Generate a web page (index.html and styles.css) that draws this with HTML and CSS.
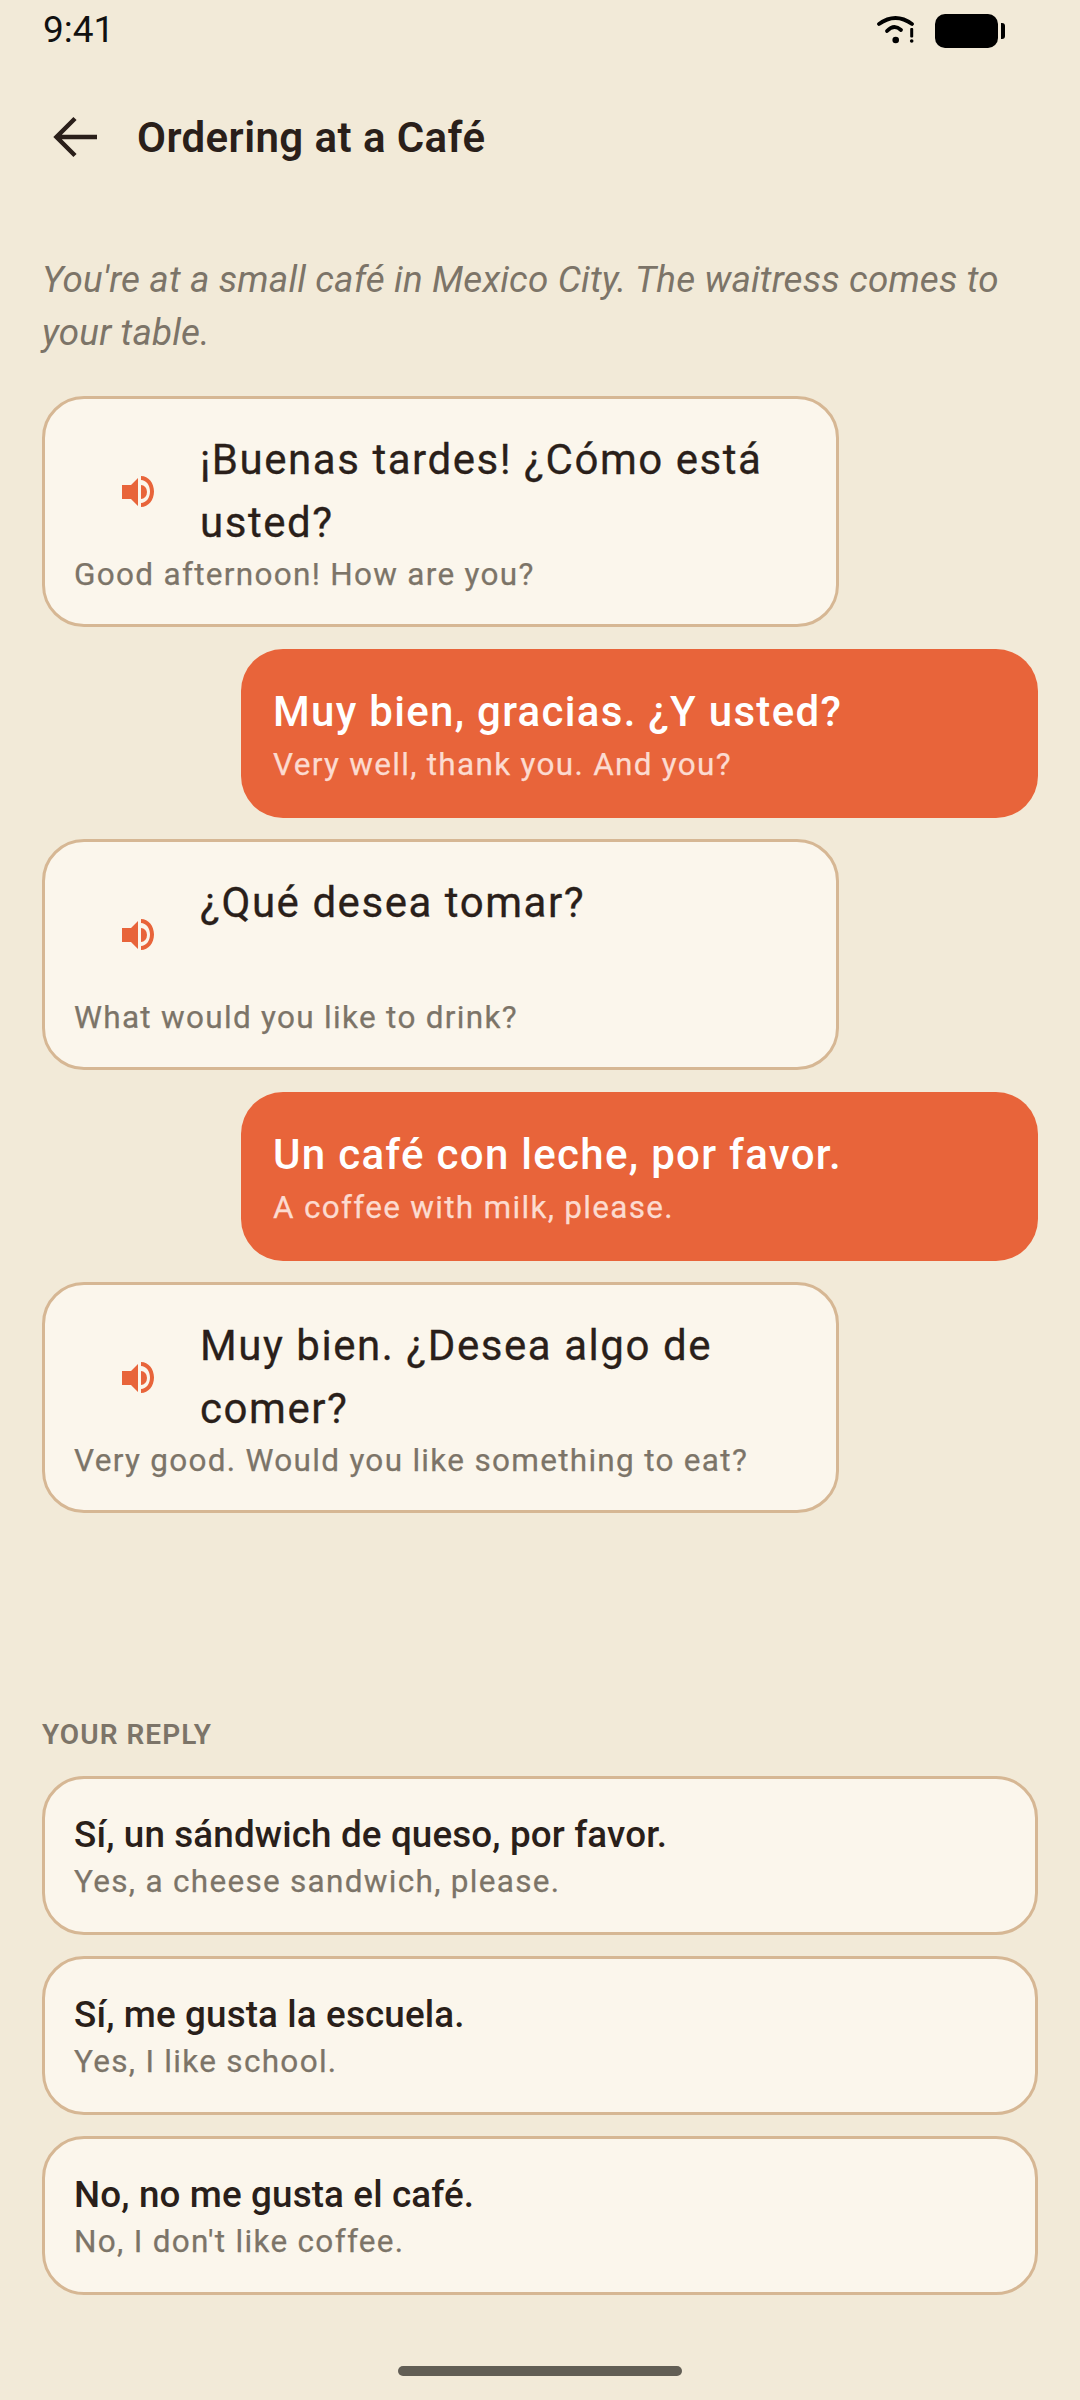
FILE: index.html
```html
<!DOCTYPE html>
<html lang="es">
<head>
<meta charset="utf-8">
<title>Ordering at a Café</title>
<link rel="stylesheet" href="styles.css">
</head>
<body>
<div class="screen">
  <div class="status">
    <span class="time">9:41</span>
    <div class="status-icons">
      <svg class="wifi" width="40" height="34" viewBox="0 0 40 34"><path d="M4 12Q20.500 0 37 12" fill="none" stroke="#000" stroke-width="3.800" stroke-linecap="round"/><path d="M12 19Q19 11.500 26 18" fill="none" stroke="#000" stroke-width="3.800" stroke-linecap="round"/><circle cx="20.700" cy="28" r="3.300" fill="#000"/><rect x="35.200" y="16" width="3" height="9.500" rx="1" fill="#000"/><circle cx="36.700" cy="29" r="1.800" fill="#000"/></svg>
      <svg class="battery" width="70" height="34" viewBox="0 0 70 34"><rect x="0" y="0" width="63" height="34" rx="10" fill="#000"/><path d="M66 9h1a3 3 0 0 1 3 3v10a3 3 0 0 1-3 3h-1z" fill="#000"/></svg>
    </div>
  </div>
  <header class="topbar">
    <svg class="back" width="46" height="46" viewBox="0 0 46 46"><path d="M46 23H8M24 4.500 5.500 23 24 41.500" fill="none" stroke="#2a1f1a" stroke-width="4.500"/></svg>
    <h1 class="title">Ordering at a Café</h1>
  </header>
  <p class="scene">You're at a small café in Mexico City. The waitress comes to your table.</p>
  <div class="chat">
    <div class="bubble them">
      <div class="row">
        <span class="speak"><svg width="32" height="32" viewBox="0 0 32 32"><path d="M0 9h9l7-7v28l-7-7H0z" fill="#e8643a"/><path d="M19 9a6 7 0 0 1 0 14z" fill="#e8643a"/><path d="M19 0c7.500 0 13 7 13 15.500S26.500 31 19 31v-4c5 0 9-5 9-11.500S24 4 19 4z" fill="#e8643a"/></svg></span>
        <span class="es">¡Buenas tardes! ¿Cómo está usted?</span>
      </div>
      <div class="en">Good afternoon! How are you?</div>
    </div>
    <div class="bubble me">
      <div class="es">Muy bien, gracias. ¿Y usted?</div>
      <div class="en">Very well, thank you. And you?</div>
    </div>
    <div class="bubble them">
      <div class="row">
        <span class="speak"><svg width="32" height="32" viewBox="0 0 32 32"><path d="M0 9h9l7-7v28l-7-7H0z" fill="#e8643a"/><path d="M19 9a6 7 0 0 1 0 14z" fill="#e8643a"/><path d="M19 0c7.500 0 13 7 13 15.500S26.500 31 19 31v-4c5 0 9-5 9-11.500S24 4 19 4z" fill="#e8643a"/></svg></span>
        <span class="es">¿Qué desea tomar?</span>
      </div>
      <div class="en">What would you like to drink?</div>
    </div>
    <div class="bubble me">
      <div class="es">Un café con leche, por favor.</div>
      <div class="en">A coffee with milk, please.</div>
    </div>
    <div class="bubble them">
      <div class="row">
        <span class="speak"><svg width="32" height="32" viewBox="0 0 32 32"><path d="M0 9h9l7-7v28l-7-7H0z" fill="#e8643a"/><path d="M19 9a6 7 0 0 1 0 14z" fill="#e8643a"/><path d="M19 0c7.500 0 13 7 13 15.500S26.500 31 19 31v-4c5 0 9-5 9-11.500S24 4 19 4z" fill="#e8643a"/></svg></span>
        <span class="es">Muy bien. ¿Desea algo de comer?</span>
      </div>
      <div class="en">Very good. Would you like something to eat?</div>
    </div>
  </div>
  <section class="replies">
    <div class="label">YOUR REPLY</div>
    <div class="option"><div class="opt-es">Sí, un sándwich de queso, por favor.</div><div class="opt-en">Yes, a cheese sandwich, please.</div></div>
    <div class="option"><div class="opt-es">Sí, me gusta la escuela.</div><div class="opt-en">Yes, I like school.</div></div>
    <div class="option"><div class="opt-es">No, no me gusta el café.</div><div class="opt-en">No, I don't like coffee.</div></div>
  </section>
  <div class="home"></div>
</div>
</body>
</html>
```
FILE: styles.css
```css
* { box-sizing: border-box; }
html, body { margin: 0; padding: 0; }
body { background: #f2ead8; font-family: Roboto, sans-serif; color: #2a1f1a; }
.screen { width: 1080px; height: 2400px; display: flex; flex-direction: column; overflow: hidden; }
.status { height: 60px; padding: 8px 75px 0 43px; display: flex; justify-content: space-between; align-items: flex-start; }
.time { font-size: 37px; line-height: 44px; color: #111; }
.status-icons { display: flex; align-items: flex-start; gap: 20px; padding-top: 4px; }
.wifi { display: block; }
.battery { display: block; margin-top: 2px; }
.topbar { height: 96px; margin-top: 29px; padding-left: 51px; display: flex; align-items: center; gap: 40px; }
.back { display: block; flex: none; }
.title { margin: 2px 0 0; font-size: 42px; font-weight: 600; line-height: 48px; letter-spacing: 0.420px; }
.scene { margin: 68px 42px 0; font-size: 36.800px; line-height: 53px; letter-spacing: 0.160px; font-style: italic; color: #7c7468; }
.chat { margin-top: 37px; padding: 0 42px; display: flex; flex-direction: column; gap: 21px; }
.bubble { width: 797px; border-radius: 42px; }
.them { background: #fbf6ec; border: 3px solid #d6b794; padding: 29px 29px 27px; }
.me { background: #e8643a; color: #fff; align-self: flex-end; margin-top: 1px; padding: 35px 32px 0; height: 169px; }
.row { display: flex; align-items: flex-start; min-height: 126px; }
.speak { flex: none; width: 126px; height: 126px; padding: 2px 0 0 2px; display: flex; align-items: center; justify-content: center; }
.speak svg { display: block; }
.es { font-size: 42px; line-height: 63px; letter-spacing: 1.550px; font-weight: 400; -webkit-text-stroke: 0.300px currentColor; }
.me .es { line-height: 56px; letter-spacing: 1.300px; font-weight: 500; -webkit-text-stroke: 0; }
.en { font-size: 31.500px; line-height: 44px; letter-spacing: 1.300px; font-weight: 400; color: #7c7468; margin-top: -1px; -webkit-text-stroke: 0.250px currentColor; }
.me .en { color: #fcdbd0; margin-top: 3px; }
.replies { margin-top: auto; padding: 0 42px; display: flex; flex-direction: column; gap: 21px; }
.label { font-size: 28px; line-height: 34px; font-weight: 600; letter-spacing: 1.050px; color: #7c7468; margin-bottom: 3px; }
.option { height: 159px; background: #fbf6ec; border: 3px solid #d6b794; border-radius: 42px; padding: 31px 29px 0; }
.opt-es { font-size: 36.800px; line-height: 50px; font-weight: 500; letter-spacing: 0.130px; }
.opt-en { font-size: 31.500px; line-height: 42px; letter-spacing: 1.300px; font-weight: 400; color: #7c7468; margin-top: 1px; -webkit-text-stroke: 0.250px currentColor; }
.home { flex: none; width: 284px; height: 10px; margin: 71px auto 24px; border-radius: 5px; background: #625e55; }
```
